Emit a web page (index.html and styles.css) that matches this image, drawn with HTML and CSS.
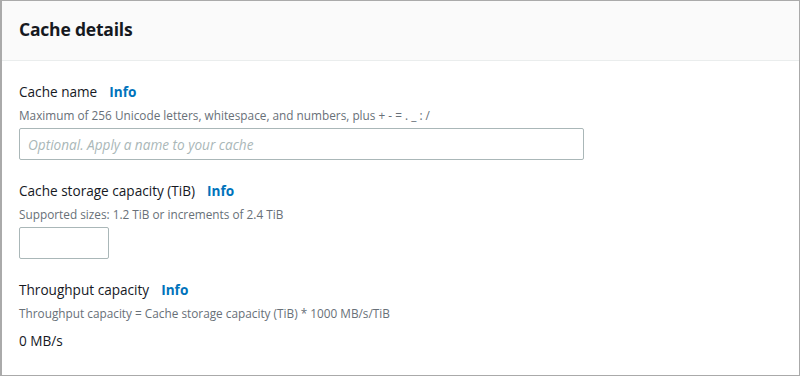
FILE: index.html
```html
<!DOCTYPE html>
<html lang="en">
<head>
    <meta charset="UTF-8">
    <meta name="viewport" content="width=device-width, initial-scale=1.0">
    <title>Cache details</title>
    <link rel="stylesheet" href="styles.css">
</head>
<body>
    <div class="panel">
        <header class="panel-header">
            <h2>Cache details</h2>
        </header>

        <div class="panel-body">
            <div class="field">
                <div class="field-label">
                    <label for="cache-name">Cache name</label>
                    <a href="#" class="info">Info</a>
                </div>
                <p class="field-desc">Maximum of 256 Unicode letters, whitespace, and numbers, plus + - = . _ : /</p>
                <input type="text" id="cache-name" class="input input-wide" placeholder="Optional. Apply a name to your cache">
            </div>

            <div class="field">
                <div class="field-label">
                    <label for="capacity">Cache storage capacity (TiB)</label>
                    <a href="#" class="info">Info</a>
                </div>
                <p class="field-desc">Supported sizes: 1.2 TiB or increments of 2.4 TiB</p>
                <input type="text" id="capacity" class="input input-small">
            </div>

            <div class="field">
                <div class="field-label">
                    <label>Throughput capacity</label>
                    <a href="#" class="info">Info</a>
                </div>
                <p class="field-desc">Throughput capacity = Cache storage capacity (TiB) * 1000 MB/s/TiB</p>
                <div class="field-value">0 MB/s</div>
            </div>
        </div>
    </div>
</body>
</html>
```

FILE: styles.css
```css
* {
    margin: 0;
    padding: 0;
    box-sizing: border-box;
    font-family: 'Open Sans', 'Noto Sans', sans-serif;
}

body {
    background: white;
    color: #16191f;
}

.panel {
    width: 800px;
    height: 376px;
    border: 1px solid #aaa;
    border-left-width: 2px;
    background: white;
}

.panel-header {
    height: 60px;
    padding: 0 17px;
    display: flex;
    align-items: center;
    background: #fafafa;
    border-bottom: 1px solid #eaeded;
}

.panel-header h2 {
    font-size: 17.5px;
    font-weight: 700;
    line-height: 22px;
    letter-spacing: -0.2px;
    margin-top: -4px;
}

.panel-body {
    padding: 20px 17px;
}

.field {
    margin-bottom: 20px;
}

.field-label {
    display: flex;
    align-items: center;
    gap: 12px;
    font-size: 13.6px;
    line-height: 22px;
}

.info {
    color: #0073bb;
    font-weight: 700;
    text-decoration: none;
}

.field-desc {
    margin-top: 4px;
    font-size: 11.8px;
    line-height: 16px;
    color: #687078;
}

.input {
    display: block;
    height: 32px;
    margin-top: 5px;
    padding: 4px 8px;
    border: 1px solid #aab7b8;
    border-radius: 2px;
    font-size: 13.6px;
    color: #16191f;
    background: white;
}

.input::placeholder {
    color: #aab7b8;
    font-style: italic;
}

.input-wide {
    width: 565px;
}

.input-small {
    width: 90px;
}

.field-value {
    margin-top: 9px;
    font-size: 13.6px;
    line-height: 22px;
}
```
